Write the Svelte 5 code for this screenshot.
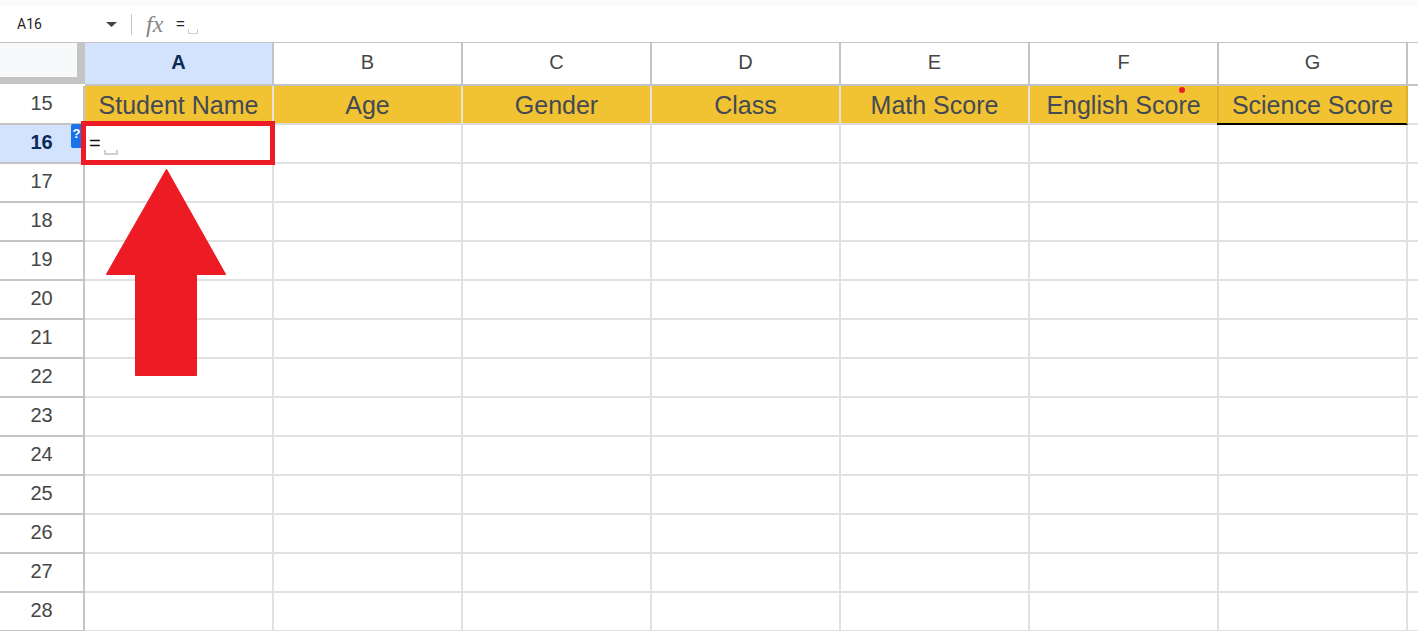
<script>
const columns = ['A', 'B', 'C', 'D', 'E', 'F', 'G', ''];
const titles = ['Student Name', 'Age', 'Gender', 'Class', 'Math Score', 'English Score', 'Science Score', ''];
const emptyRows = [17, 18, 19, 20, 21, 22, 23, 24, 25, 26, 27, 28];
</script>

<div class="page">
  <div class="topstrip"></div>

  <div class="formula-bar">
    <div class="name-box">A16</div>
    <svg class="caret" width="11" height="5" viewBox="0 0 11 5"><path d="M0 0h11L5.500 5z" fill="#444" /></svg>
    <div class="divider"></div>
    <span class="fx">fx</span>
    <span class="formula">=</span>
    <span class="space-mark small"></span>
  </div>

  <div class="sheet">
    <div class="corner"><div class="corner-inner"></div></div>
    {#each columns as col, i}
      <div class="col-head" class:selected={i === 0}>{col}</div>
    {/each}

    <div class="row-head">15</div>
    {#each titles as title, i}
      <div class="cell" class:title={i < 7} class:before-last={i === 5} class:last={i === 6}>
        {title}
        {#if i === 5}<span class="comment-dot"></span>{/if}
      </div>
    {/each}

    <div class="row-head selected">
      16
      <span class="help">?</span>
    </div>
    {#each columns as col, i}
      <div class="cell" class:active={i === 0}>
        {#if i === 0}
          <div class="editor">
            <span class="editor-text">=</span>
            <span class="space-mark"></span>
          </div>
          <svg class="arrow" width="122" height="210" viewBox="0 0 122 210">
            <path d="M60.500 .75L119.250 105.250H90.250V206.250H29.750V105.250H.75z" fill="#ed1c24" stroke="#ed1c24" stroke-width="1.500" stroke-linejoin="round" />
          </svg>
        {/if}
      </div>
    {/each}

    {#each emptyRows as row}
      <div class="row-head">{row}</div>
      {#each columns as col}
        <div class="cell"></div>
      {/each}
    {/each}
  </div>
</div>

<style>
  :global(body) {
    margin: 0;
    background-color: #fff;
    overflow: hidden;
  }

  .page {
    width: 1418px;
    height: 631px;
    overflow: hidden;
    font-family: "Liberation Sans", Arial, sans-serif;
  }

  .topstrip {
    height: 6px;
    background-color: #f9fbfd;
  }

  .formula-bar {
    display: flex;
    align-items: center;
    height: 37px;
    box-sizing: border-box;
    border-bottom: 1px solid #c4c4c4;
    background-color: #fff;
  }

  .name-box {
    width: 106px;
    padding-left: 17px;
    box-sizing: border-box;
    font-family: Roboto, sans-serif;
    font-size: 14px;
    color: #1f1f1f;
  }

  .caret {
    margin-right: 14px;
  }

  .divider {
    width: 1px;
    height: 21px;
    background-color: #c7c7c7;
    margin-right: 14px;
  }

  .fx {
    width: 30px;
    font-family: "Liberation Serif", serif;
    font-style: italic;
    font-size: 24px;
    color: #858585;
    line-height: 20px;
  }

  .formula {
    font-size: 15px;
    color: #222;
    width: 12px;
    margin-top: -1px;
  }

  .space-mark {
    display: inline-block;
    width: 14px;
    height: 5px;
    box-sizing: border-box;
    border: 2px solid #cfcfcf;
    border-top: none;
  }

  .space-mark.small {
    width: 10px;
    height: 5px;
    border-width: 1px;
    margin-top: 14px;
  }

  .sheet {
    display: grid;
    grid-template-columns: 85px repeat(7, 189px) 60px;
    grid-auto-rows: 39px;
    grid-template-rows: 43px;
  }

  .corner {
    box-sizing: border-box;
    height: 41px;
    background-color: #c4c4c4;
  }

  .corner-inner {
    width: 77px;
    height: 34px;
    background-color: #f8f9fa;
  }

  .col-head {
    display: flex;
    align-items: center;
    justify-content: center;
    box-sizing: border-box;
    padding-bottom: 3px;
    border-right: 2px solid #c4c4c4;
    border-bottom: 2px solid #c4c4c4;
    font-size: 20px;
    color: #444746;
    background-color: #fff;
  }

  .col-head.selected {
    background-color: #d3e3fd;
    color: #0b2a55;
    font-weight: bold;
  }

  .row-head {
    position: relative;
    display: flex;
    align-items: center;
    justify-content: center;
    box-sizing: border-box;
    padding-bottom: 2px;
    border-right: 2px solid #c4c4c4;
    border-bottom: 2px solid #c4c4c4;
    font-size: 20px;
    color: #444746;
    background-color: #fff;
  }

  .row-head.selected {
    background-color: #d3e3fd;
    color: #0b2a55;
    font-weight: bold;
  }

  .help {
    position: absolute;
    top: -1px;
    right: 0;
    width: 12px;
    height: 24px;
    box-sizing: border-box;
    padding-right: 1px;
    border-radius: 2px 0 0 2px;
    background-color: #1a73e8;
    color: #fff;
    font-size: 13px;
    line-height: 20px;
    text-align: center;
  }

  .cell {
    position: relative;
    display: flex;
    align-items: center;
    justify-content: center;
    box-sizing: border-box;
    border-right: 2px solid #e1e1e1;
    border-bottom: 2px solid #e1e1e1;
    font-size: 25px;
    color: #434a54;
  }

  .cell.title {
    padding-top: 2px;
    background-color: #f1c232;
    border-right-color: #e6e3d8;
    border-bottom-color: #d9d9de;
  }

  .cell.before-last {
    border-right-color: #dcb12e;
  }

  .cell.last {
    border-right-color: #dcb12e;
    border-bottom-color: #000;
  }

  /* black rule starts under the neighbouring cell's border */
  .cell.last::after {
    content: '';
    position: absolute;
    left: -2px;
    bottom: -2px;
    width: 2px;
    height: 2px;
    background-color: #000;
  }

  .comment-dot {
    position: absolute;
    top: 1px;
    right: 32px;
    width: 6px;
    height: 6px;
    border-radius: 50%;
    background-color: #ed1c24;
  }

  .editor {
    position: absolute;
    top: -4px;
    left: -4px;
    width: 194px;
    height: 44px;
    box-sizing: border-box;
    display: flex;
    align-items: center;
    padding-left: 3px;
    border: 5px solid #ed1c24;
    background-color: #fff;
    z-index: 2;
  }

  .editor-text {
    font-size: 20px;
    color: #111;
    width: 15px;
  }

  .editor .space-mark {
    margin-top: 19px;
  }

  .arrow {
    position: absolute;
    top: 44px;
    left: 21px;
    z-index: 3;
  }
</style>
